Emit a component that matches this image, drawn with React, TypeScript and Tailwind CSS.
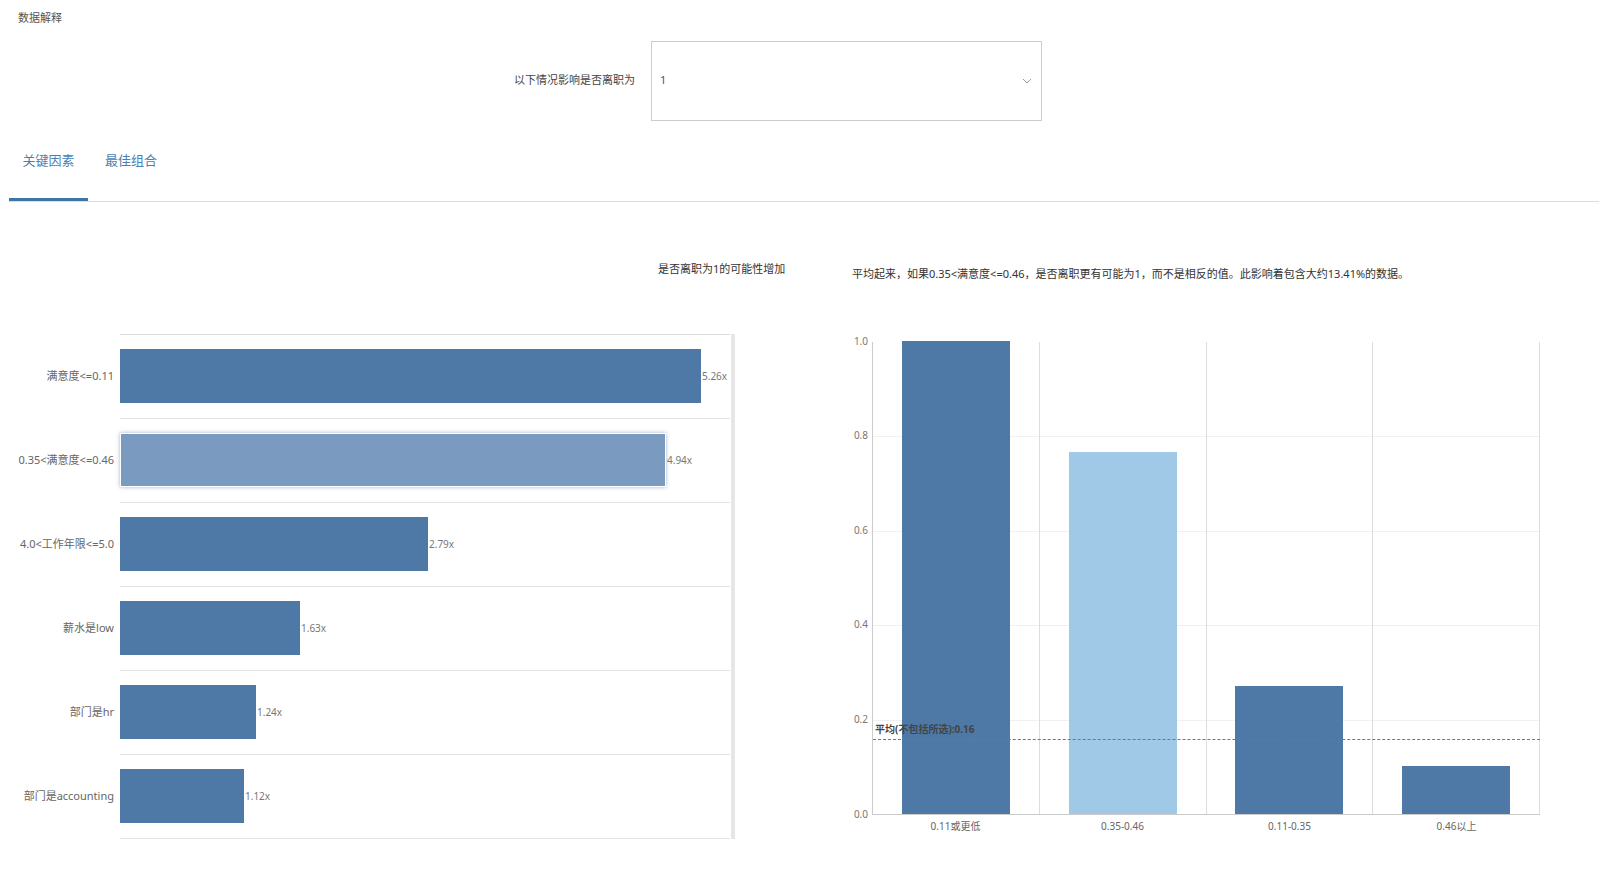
import * as React from 'react';

const factors = [
  { label: '满意度<=0.11', value: '5.26x', width: 581, selected: false },
  { label: '0.35<满意度<=0.46', value: '4.94x', width: 546, selected: true },
  { label: '4.0<工作年限<=5.0', value: '2.79x', width: 308, selected: false },
  { label: '薪水是low', value: '1.63x', width: 180, selected: false },
  { label: '部门是hr', value: '1.24x', width: 136, selected: false },
  { label: '部门是accounting', value: '1.12x', width: 124, selected: false },
];

const columns = [
  { label: '0.11或更低', value: 1.0, light: false },
  { label: '0.35-0.46', value: 0.765, light: true },
  { label: '0.11-0.35', value: 0.27, light: false },
  { label: '0.46以上', value: 0.1, light: false },
];

const PLOT_H = 473;

function FactorChart() {
  return (
    <div className="flex w-[735px] pt-[66px]">
      <div className="flex w-[120px] flex-col pt-px">
        {factors.map((f) => (
          <div key={f.label} className="flex h-[84px] items-center justify-end pr-[6px] text-[11px] text-[#666]">
            {f.label}
          </div>
        ))}
      </div>
      <div className="w-[610px] border-t border-[#ddd]">
        {factors.map((f) => (
          <div key={f.label} className="flex h-[84px] items-center border-b border-[#e3e3e3]">
            <div
              className={
                f.selected
                  ? 'h-[54px] bg-[#7a9bbf] shadow-[0_0_4px_rgba(100,130,170,0.6)] border border-white'
                  : 'h-[54px] bg-[#4e78a5]'
              }
              style={{ width: f.width }}
            />
            <span className="pl-px text-[10px] text-[#777]">{f.value}</span>
          </div>
        ))}
      </div>
      <div className="ml-px w-[4px] self-stretch bg-[#e6e6e6]" />
    </div>
  );
}

function ColumnChart() {
  const ticks = [1.0, 0.8, 0.6, 0.4, 0.2, 0.0];
  return (
    <div className="flex pt-[74px]">
      <div className="relative w-[52px]" style={{ height: PLOT_H }}>
        {ticks.map((t) => (
          <span
            key={t}
            className="absolute right-[4px] text-[10px] leading-none text-[#777]"
            style={{ top: PLOT_H - t * PLOT_H - 6 }}
          >
            {t.toFixed(1)}
          </span>
        ))}
      </div>
      <div>
        <div className="relative flex w-[668px] border-b border-l border-[#ccc]" style={{ height: PLOT_H }}>
          {[0.2, 0.4, 0.6, 0.8].map((t) => (
            <div
              key={t}
              className="absolute left-0 right-0 border-t border-[#f0f0f0]"
              style={{ top: PLOT_H - t * PLOT_H }}
            />
          ))}
          {columns.map((c) => (
            <div key={c.label} className="relative flex flex-1 items-end justify-center border-r border-[#ddd]">
              <div
                className={c.light ? 'w-[108px] bg-[#a0c8e7]' : 'w-[108px] bg-[#4e78a5]'}
                style={{ height: c.value * PLOT_H }}
              />
            </div>
          ))}
          <div
            className="absolute left-0 right-0 border-t border-dashed border-[#777]"
            style={{ top: PLOT_H - 0.16 * PLOT_H }}
          />
          <span
            className="absolute left-[2px] text-[10px] font-bold text-[#444]"
            style={{ top: PLOT_H - 0.16 * PLOT_H - 17 }}
          >
            平均(不包括所选):0.16
          </span>
        </div>
        <div className="flex w-[668px]">
          {columns.map((c) => (
            <div key={c.label} className="flex-1 pt-[4px] text-center text-[10px] text-[#666]">
              {c.label}
            </div>
          ))}
        </div>
      </div>
    </div>
  );
}

export default function App() {
  return (
    <div
      className="h-[872px] w-[1608px] overflow-hidden bg-white"
      style={{ fontFamily: '"Noto Sans", "Noto Sans CJK SC", sans-serif' }}
    >
      <div className="pl-[18px] pt-[10px] text-[11px] text-[#555]">数据解释</div>
      <div className="mt-[14px] flex items-center">
        <span className="ml-[514px] w-[137px] text-[11px] text-[#444]">以下情况影响是否离职为</span>
        <div className="flex h-[80px] w-[391px] items-center justify-between border border-[#ccc] px-[8px]">
          <span className="text-[11px] text-[#555]">1</span>
          <svg width="10" height="6" viewBox="0 0 10 6" className="mr-[1px]">
            <path d="M1 1l4 4 4-4" fill="none" stroke="#999" strokeWidth="1" />
          </svg>
        </div>
      </div>
      <div className="mx-[9px] mt-[20px] flex border-b border-[#ddd] text-[13px] text-[#4a7fb3]">
        <div className="flex h-[60px] w-[79px] items-start justify-center border-b-[3px] border-[#3f74a6] pt-[10px]">关键因素</div>
        <div className="pl-[17px] pt-[10px]">最佳组合</div>
      </div>
      <div className="relative flex">
        <div className="absolute left-[658px] top-[59px] text-[11px] text-[#333]">是否离职为1的可能性增加</div>
        <div className="absolute left-[852px] top-[64px] text-[11px] text-[#333]">
          平均起来，如果0.35&lt;满意度&lt;=0.46，是否离职更有可能为1，而不是相反的值。此影响着包含大约13.41%的数据。
        </div>
        <div className="flex pt-[66px]">
          <FactorChart />
          <div className="ml-[85px]">
            <ColumnChart />
          </div>
        </div>
      </div>
    </div>
  );
}
